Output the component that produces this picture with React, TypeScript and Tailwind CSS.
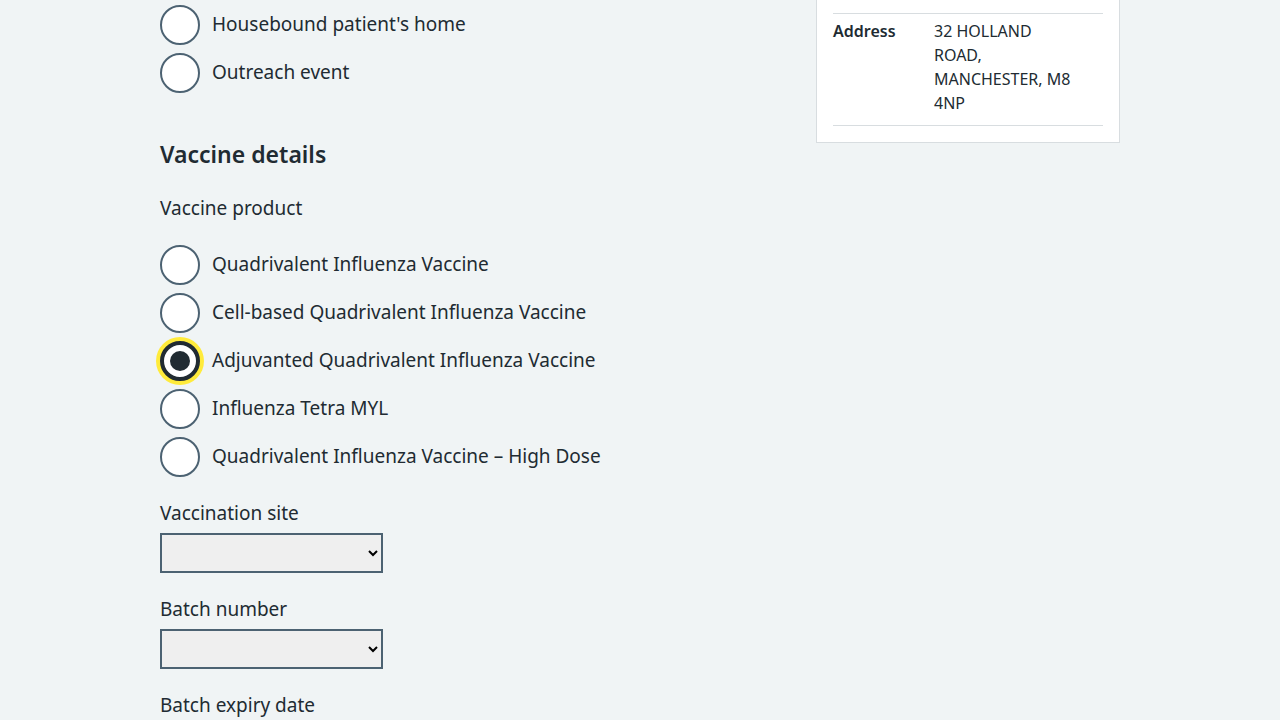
import { useState } from "react";

type RadioProps = {
  name: string;
  label: string;
  checked: boolean;
  onSelect: () => void;
};

function Radio({ name, label, checked, onSelect }: RadioProps) {
  return (
    <label className="flex items-center gap-3">
      <input
        type="radio"
        name={name}
        checked={checked}
        onChange={onSelect}
        className="peer sr-only"
      />
      <span
        aria-hidden="true"
        className={
          checked
            ? "flex size-10 shrink-0 items-center justify-center rounded-full border-4 border-[#212b32] bg-white ring-4 ring-[#ffeb3b]"
            : "flex size-10 shrink-0 items-center justify-center rounded-full border-2 border-[#4c6272] bg-white"
        }
      >
        {checked && <span className="size-5 rounded-full bg-[#212b32]" />}
      </span>
      <span className="pb-0.5 leading-7">{label}</span>
    </label>
  );
}

function SelectField({ id, label }: { id: string; label: string }) {
  return (
    <div className="mt-[22px] flex flex-col items-start gap-[6px]">
      <label htmlFor={id} className="leading-7">
        {label}
      </label>
      <select
        id={id}
        className="h-10 w-[223px] border-2 border-[#4c6272] bg-[#efefef] p-1 text-black"
      >
        <option value="" />
      </select>
    </div>
  );
}

const locations = ["Housebound patient's home", "Outreach event"];

const products = [
  "Quadrivalent Influenza Vaccine",
  "Cell-based Quadrivalent Influenza Vaccine",
  "Adjuvanted Quadrivalent Influenza Vaccine",
  "Influenza Tetra MYL",
  "Quadrivalent Influenza Vaccine – High Dose",
];

export default function App() {
  const [location, setLocation] = useState("");
  const [product, setProduct] = useState(products[2]);

  return (
    <div className="h-screen overflow-hidden bg-[#f0f4f5] font-['Noto_Sans','Open_Sans',sans-serif] text-[19px] text-[#212b32] [font-variant-ligatures:none]">
      <div className="mx-auto flex max-w-[960px] items-start justify-between gap-8">
        <main className="min-w-0 flex-1">
          <div className="flex flex-col gap-2 pt-[5px]">
            {locations.map((item) => (
              <Radio
                key={item}
                name="location"
                label={item}
                checked={location === item}
                onSelect={() => setLocation(item)}
              />
            ))}
          </div>

          <h2 className="mt-[45px] text-[23px] leading-8 font-semibold">Vaccine details</h2>

          <fieldset className="mt-6">
            <legend className="mb-[23px] leading-7">Vaccine product</legend>
            <div className="flex flex-col gap-2">
              {products.map((item) => (
                <Radio
                  key={item}
                  name="product"
                  label={item}
                  checked={product === item}
                  onSelect={() => setProduct(item)}
                />
              ))}
            </div>
          </fieldset>

          <SelectField id="site" label="Vaccination site" />
          <SelectField id="batch" label="Batch number" />

          <p className="mt-[22px] leading-7">Batch expiry date</p>
        </main>

        <aside className="w-[304px] shrink-0 border border-t-0 border-[#d8dde0] bg-white px-4 pt-[13px] pb-4 text-base leading-6">
          <dl className="flex border-y border-[#d8dde0] pt-[5px] pb-[10px]">
            <dt className="w-[101px] shrink-0 font-semibold">Address</dt>
            <dd>
              32 HOLLAND
              <br />
              ROAD,
              <br />
              MANCHESTER, M8
              <br />
              4NP
            </dd>
          </dl>
        </aside>
      </div>
    </div>
  );
}
